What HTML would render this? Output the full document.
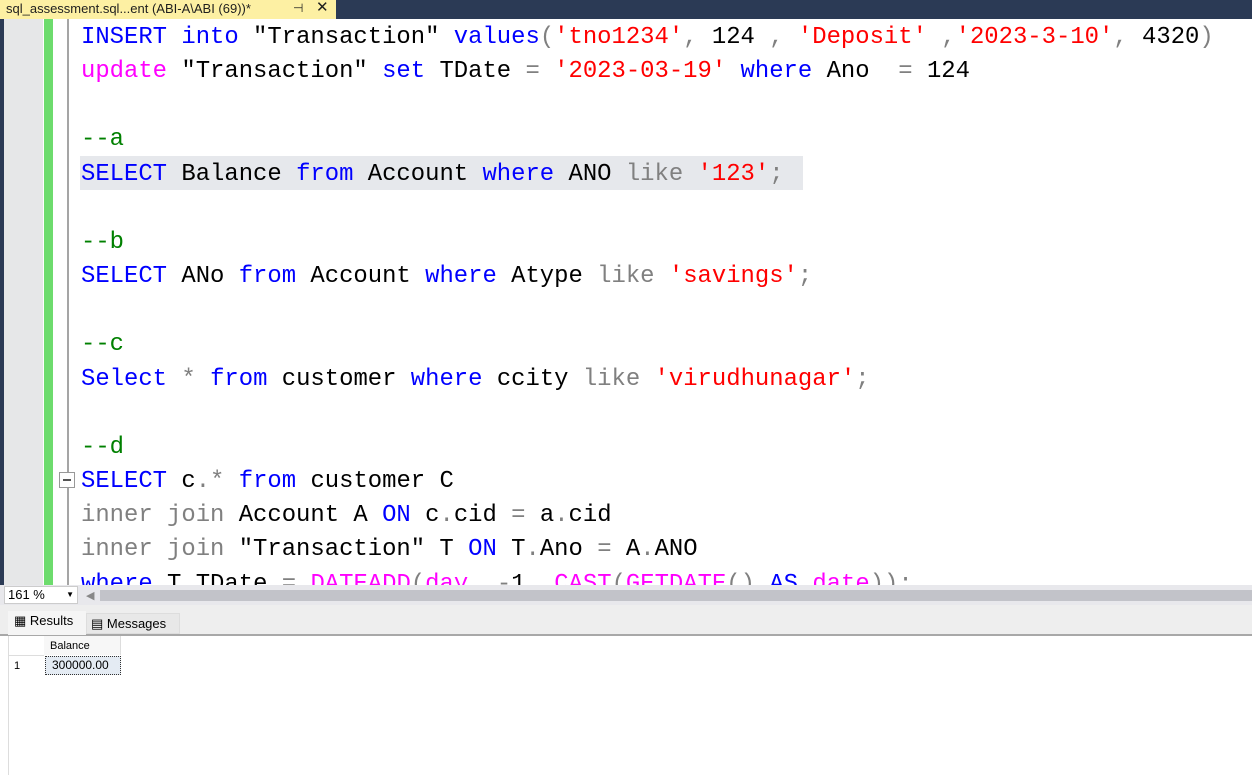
<!DOCTYPE html>
<html><head><style>
body{margin:0;width:1252px;height:775px;overflow:hidden;background:#fff;position:relative;font-family:"Liberation Sans",sans-serif}
.abs{position:absolute}
.code{position:absolute;left:81px;top:2px;font-family:"Liberation Mono",monospace;font-size:23.9px;line-height:34.15px;white-space:pre;color:#000}
.k{color:#0000ff}.s{color:#ff0000}.g{color:#808080}.c{color:#008000}.m{color:#ff00ff}
</style></head><body>
<div class="abs" style="left:0;top:0;width:1252px;height:19px;background:#2b3a55"></div>
<div class="abs" style="left:0;top:0;width:336px;height:19px;background:#fdf0a3;font-size:13px;line-height:17px;color:#1e1e1e"><span style="margin-left:6px">sql_assessment.sql...ent (ABI-A\ABI (69))*</span><span style="position:absolute;left:293px;font-size:12px">⊣</span><span style="position:absolute;left:316px;top:-1px;font-size:15px">✕</span></div>
<div class="abs" style="left:0;top:19px;width:4px;height:566px;background:#2b3a55"></div>
<div class="abs" style="left:4px;top:19px;width:39px;height:566px;background:#e6e7e8"></div>
<div class="abs" style="left:44px;top:19px;width:9px;height:566px;background:#6ddc6d"></div>
<div class="abs" style="left:67px;top:19px;width:2px;height:566px;background:#a5a5a5"></div>
<div class="abs" style="left:80px;top:156px;width:723px;height:34px;background:#e6e8ec"></div>
<div class="abs" style="left:59px;top:472px;width:14px;height:14px;border:1px solid #999;background:#fff"><div style="position:absolute;left:3px;top:6px;width:8px;height:2px;background:#555"></div></div>
<div class="abs" style="left:0;top:19px;width:1252px;height:566px;overflow:hidden">
<div class="code"><span class="k">INSERT into</span> "Transaction" <span class="k">values</span><span class="g">(</span><span class="s">'tno1234'</span><span class="g">,</span> 124 <span class="g">,</span> <span class="s">'Deposit'</span> <span class="g">,</span><span class="s">'2023-3-10'</span><span class="g">,</span> 4320<span class="g">)</span>
<span class="m">update</span> "Transaction" <span class="k">set</span> TDate <span class="g">=</span> <span class="s">'2023-03-19'</span> <span class="k">where</span> Ano  <span class="g">=</span> 124

<span class="c">--a</span>
<span class="k">SELECT</span> Balance <span class="k">from</span> Account <span class="k">where</span> ANO <span class="g">like</span> <span class="s">'123'</span><span class="g">;</span>

<span class="c">--b</span>
<span class="k">SELECT</span> ANo <span class="k">from</span> Account <span class="k">where</span> Atype <span class="g">like</span> <span class="s">'savings'</span><span class="g">;</span>

<span class="c">--c</span>
<span class="k">Select</span> <span class="g">*</span> <span class="k">from</span> customer <span class="k">where</span> ccity <span class="g">like</span> <span class="s">'virudhunagar'</span><span class="g">;</span>

<span class="c">--d</span>
<span class="k">SELECT</span> c<span class="g">.*</span> <span class="k">from</span> customer C
<span class="g">inner join</span> Account A <span class="k">ON</span> c<span class="g">.</span>cid <span class="g">=</span> a<span class="g">.</span>cid
<span class="g">inner join</span> "Transaction" T <span class="k">ON</span> T<span class="g">.</span>Ano <span class="g">=</span> A<span class="g">.</span>ANO
<span class="k">where</span> T<span class="g">.</span>TDate <span class="g">=</span> <span class="m">DATEADD</span><span class="g">(</span><span class="m">day</span><span class="g">,</span> <span class="g">-</span>1<span class="g">,</span> <span class="m">CAST</span><span class="g">(</span><span class="m">GETDATE</span><span class="g">()</span> <span class="k">AS</span> <span class="m">date</span><span class="g">));</span></div>
</div>
<div class="abs" style="left:0;top:585px;width:1252px;height:20px;background:#e8e8ec"></div>
<div class="abs" style="left:4px;top:586px;width:74px;height:18px;background:#fff;border:1px solid #ccc;box-sizing:border-box;font-size:13px;line-height:16px;padding-left:3px">161 %<span style="position:absolute;right:3px;font-size:8px">▼</span></div>
<div class="abs" style="left:86px;top:589px;font-size:11px;color:#888">◀</div>
<div class="abs" style="left:100px;top:590px;width:1152px;height:11px;background:#c2c3c9"></div>
<div class="abs" style="left:0;top:605px;width:1252px;height:29px;background:#eeeeee"></div>
<div class="abs" style="left:0;top:634px;width:1252px;height:2px;background:#a8a8a8"></div>
<div class="abs" style="left:8px;top:611px;width:78px;height:24px;background:#f5f5f5;font-size:13px;line-height:20px"><span style="margin-left:6px">▦ Results</span></div>
<div class="abs" style="left:86px;top:613px;width:94px;height:21px;background:#e8e8e8;border:1px solid #ddd;box-sizing:border-box;font-size:13px;line-height:20px"><span style="margin-left:4px">▤ Messages</span></div>
<div class="abs" style="left:8px;top:636px;width:1244px;height:139px;background:#fff;border-left:1px solid #ddd"></div>
<div class="abs" style="left:44px;top:636px;width:77px;height:19px;background:#f7f7f7;border-right:1px solid #ddd;font-size:11px;line-height:20px;padding-left:6px;box-sizing:border-box">Balance</div>
<div class="abs" style="left:8px;top:655px;width:36px;height:20px;border-top:1px solid #ddd;font-size:11px;line-height:20px;padding-left:6px;box-sizing:border-box">1</div>
<div class="abs" style="left:45px;top:656px;width:76px;height:19px;background:#e4ebf3;border:1px dotted #333;box-sizing:border-box;font-size:12px;line-height:17px;padding-left:6px">300000.00</div>
</body></html>
